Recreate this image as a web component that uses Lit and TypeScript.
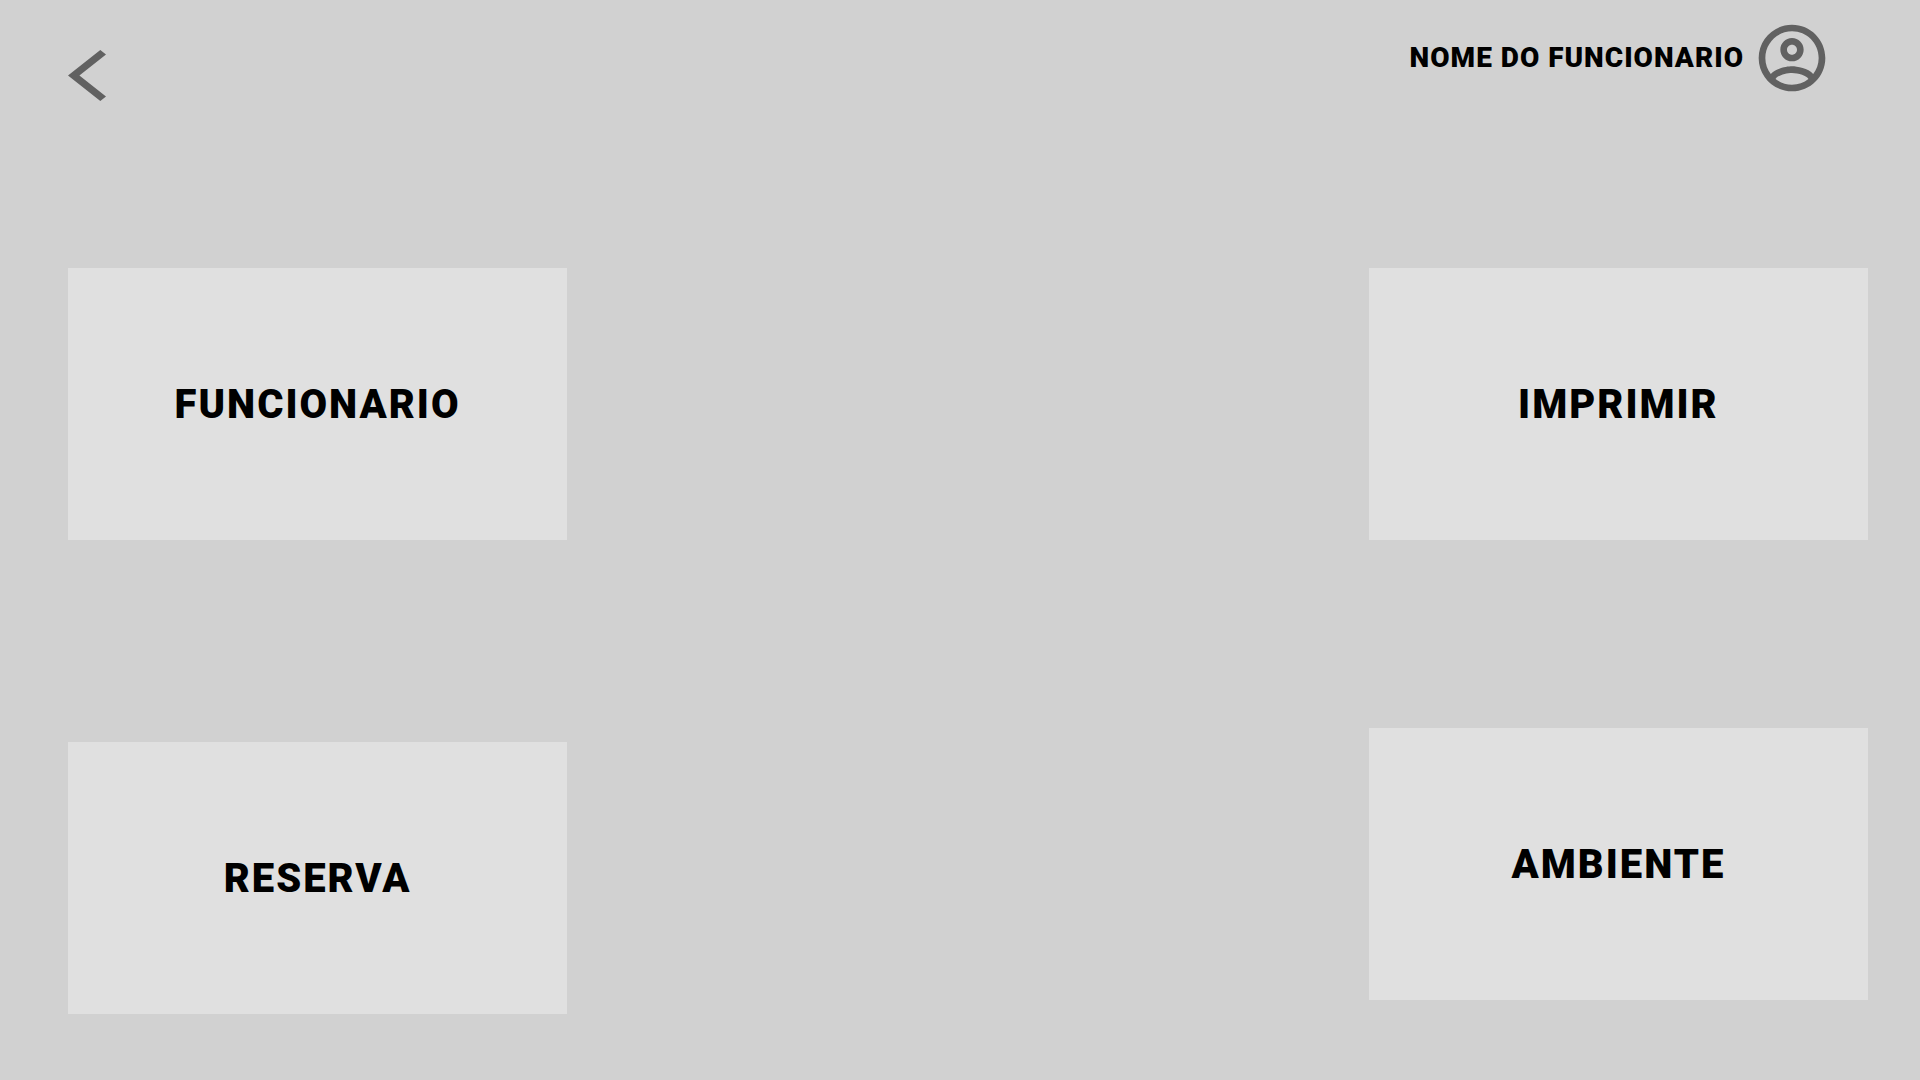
import { LitElement, html, css } from "lit";
import { customElement, property } from "lit/decorators.js";

@customElement("menu-card")
class MenuCard extends LitElement {
  @property() label = "";

  static styles = css`
    :host {
      display: block;
    }
    .card {
      display: block;
      width: 100%;
      height: 272px;
      margin: 0;
      padding: 2px 16px 0;
      border: 0;
      border-radius: 0;
      background: #e0e0e0;
      color: #000;
      font: 900 40px/48px Roboto, "Liberation Sans", sans-serif;
      letter-spacing: 2px;
      text-align: center;
      cursor: pointer;
    }
    .card:hover {
      background: #e8e8e8;
    }
  `;

  render() {
    return html`<button class="card" type="button">${this.label}</button>`;
  }
}

@customElement("app-root")
class AppRoot extends LitElement {
  static styles = css`
    :host {
      display: block;
      min-height: 100vh;
      background: #d1d1d1;
      color: #000;
      font-family: Roboto, "Liberation Sans", sans-serif;
    }
    .header {
      display: flex;
      justify-content: space-between;
      align-items: flex-start;
      padding: 18px 88px 0 68px;
    }
    .back,
    .user {
      margin: 0;
      padding: 0;
      border: 0;
      background: none;
      color: #616161;
      cursor: pointer;
    }
    .back {
      margin-top: 32px;
    }
    .icon {
      display: block;
      fill: currentColor;
    }
    .user {
      display: flex;
      align-items: center;
      gap: 8px;
    }
    .name {
      color: #000;
      font: 900 28px/32px Roboto, "Liberation Sans", sans-serif;
      letter-spacing: 1px;
    }
    .menu {
      display: flex;
      justify-content: space-between;
      align-items: flex-start;
      padding: 167px 52px 64px 68px;
    }
    .column {
      display: flex;
      flex-direction: column;
      width: 26vw;
      gap: 202px;
    }
    .column.end {
      gap: 188px;
    }
  `;

  render() {
    return html`
      <header class="header">
        <button class="back" type="button" aria-label="Voltar">
          <svg class="icon" width="38" height="51" viewBox="0 0 38 51" aria-hidden="true">
            <path d="M0 25.5 32.3 0 38 4.5 11.4 25.5 38 46.5 32.3 51Z" />
          </svg>
        </button>
        <button class="user" type="button">
          <span class="name">NOME DO FUNCIONARIO</span>
          <svg class="icon" width="80" height="80" viewBox="0 0 24 24" aria-hidden="true">
            <path
              d="M12 2C6.48 2 2 6.48 2 12s4.48 10 10 10 10-4.48 10-10S17.52 2 12 2zM7.07 18.28c.43-.9 3.05-1.78 4.93-1.78s4.51.88 4.93 1.78C15.57 19.36 13.86 20 12 20s-3.57-.64-4.93-1.72zm11.29-1.45c-1.43-1.74-4.9-2.33-6.36-2.33s-4.93.59-6.36 2.33C4.62 15.49 4 13.82 4 12c0-4.41 3.59-8 8-8s8 3.59 8 8c0 1.82-.62 3.49-1.64 4.83zM12 6c-1.94 0-3.5 1.56-3.5 3.5S10.06 13 12 13s3.5-1.56 3.5-3.5S13.94 6 12 6zm0 5c-.83 0-1.5-.67-1.5-1.5S11.17 8 12 8s1.5.67 1.5 1.5S12.83 11 12 11z"
            />
          </svg>
        </button>
      </header>
      <main class="menu">
        <div class="column">
          <menu-card label="FUNCIONARIO"></menu-card>
          <menu-card label="RESERVA"></menu-card>
        </div>
        <div class="column end">
          <menu-card label="IMPRIMIR"></menu-card>
          <menu-card label="AMBIENTE"></menu-card>
        </div>
      </main>
    `;
  }
}
